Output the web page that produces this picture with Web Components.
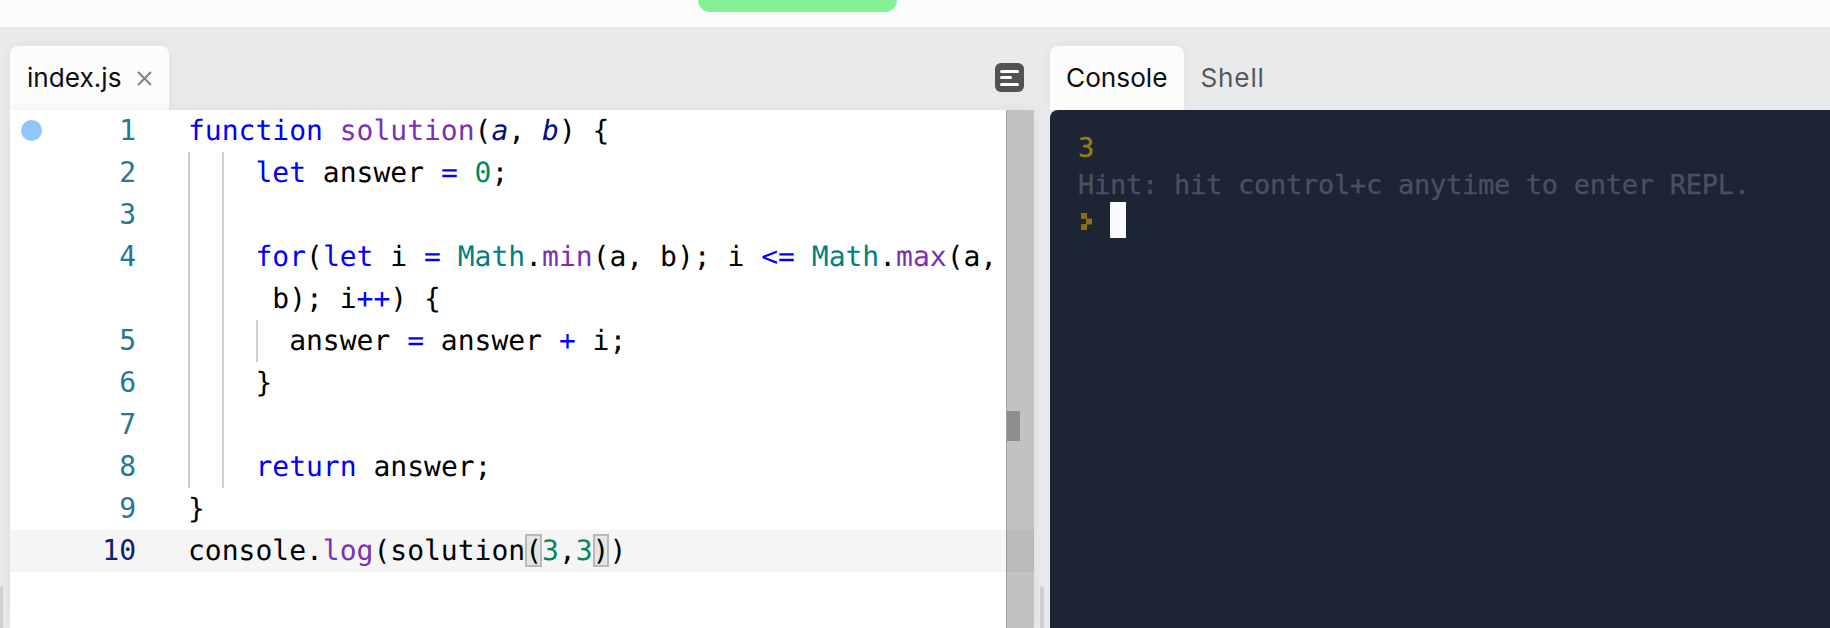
<!DOCTYPE html>
<html lang="en"><head><meta charset="utf-8"><title>Editor</title>
<style>
html,body{margin:0;padding:0;height:628px;overflow:hidden;background:#e9eaec}
</style></head>
<body>
<ide-shell>
  <top-bar slot="top"></top-bar>
  <code-pane slot="left">
    <code-line n="1"><span class="k">function</span> <span class="f">solution</span>(<span class="p">a</span>, <span class="p">b</span>) {</code-line>
    <code-line n="2" guides="2">    <span class="k">let</span> answer <span class="k">=</span> <span class="m">0</span>;</code-line>
    <code-line n="3" guides="2"></code-line>
    <code-line n="4" guides="2">    <span class="k">for</span>(<span class="k">let</span> i <span class="k">=</span> <span class="t">Math</span>.<span class="f">min</span>(a, b); i <span class="k">&lt;=</span> <span class="t">Math</span>.<span class="f">max</span>(a,</code-line>
    <code-line guides="2">     b); i<span class="k">++</span>) {</code-line>
    <code-line n="5" guides="3">      answer <span class="k">=</span> answer <span class="k">+</span> i;</code-line>
    <code-line n="6" guides="2">    }</code-line>
    <code-line n="7" guides="2"></code-line>
    <code-line n="8" guides="2">    <span class="k">return</span> answer;</code-line>
    <code-line n="9">}</code-line>
    <code-line n="10" active>console.<span class="f">log</span>(solution<span class="b">(</span><span class="m">3</span>,<span class="m">3</span><span class="b">)</span>)</code-line>
  </code-pane>
  <console-pane slot="right"></console-pane>
</ide-shell>
<script>
function def(name, css, html, init){
  customElements.define(name, class extends HTMLElement{
    constructor(){super();const s=this.attachShadow({mode:'open'});s.innerHTML='<style>'+css+'</style>'+html;}
    connectedCallback(){ if(init) init(this,this.shadowRoot); }
  });
}
def('ide-shell',`
  :host{display:grid;grid-template-rows:29px 1fr;width:1830px;height:628px;overflow:hidden;background:#e9eaec}
  .work{display:grid;grid-template-columns:1050px 1fr;min-height:0;position:relative}
  .edge{position:absolute;width:4px;top:557px;bottom:0;background:#cfd0d2;border-radius:2px 2px 0 0}
  .e1{left:0;width:3px}.e2{left:1040px}
  .col{min-width:0;min-height:0}
`,`<slot name="top"></slot><div class="work"><div class="col"><slot name="left"></slot></div><div class="col"><slot name="right"></slot></div><i class="edge e1"></i><i class="edge e2"></i></div>`);

def('top-bar',`
  :host{display:flex;box-sizing:border-box;height:29px;background:#fcfcfd;border-bottom:2px solid #e4e5e7;padding-left:698px}
  .pill{width:199px;height:12px;background:#84ef94;border-radius:0 0 13px 13px}
`,`<div class="pill"></div>`);

def('tab-item',`
  :host{display:flex;align-items:center;box-sizing:border-box;height:64px;padding:0 17px 0 16px;font:26.2px/1 Inter,"Noto Sans",sans-serif;color:#56585c}
  :host([selected]){background:#fcfcfd;color:#0d0e10;border-radius:8px 8px 0 0;box-shadow:0 0 14px rgba(0,0,0,.05)}
`,`<slot></slot>`);

def('code-pane',`
  :host{display:grid;grid-template-rows:81px 1fr;height:599px;font:28px/42px "DejaVu Sans Mono",monospace;color:#000}
  .tabs{display:flex;align-items:flex-end;justify-content:space-between;padding:0 26px 0 10px}
  .tabs>svg{display:block;margin-bottom:18px}
  .x{display:block;margin-left:15px}
  .idx{padding-left:1px}
  .body{position:relative;margin-left:10px;margin-right:16px;background:#fff;box-shadow:0 0 12px rgba(0,0,0,.06);overflow:hidden}
  .sb{position:absolute;left:996px;top:0;bottom:0;width:28px;box-sizing:border-box;background:#c2c2c0;border-left:1px solid #a0a0a0}
  .thumb{position:absolute;left:0;top:301px;width:13px;height:30px;background:#8d8d8d}
  .dot{position:absolute;left:11px;top:10px;width:21px;height:21px;border-radius:50%;background:#93c5fd}
  .rows{position:relative}
`,`<div class="tabs"><tab-item selected><span class="idx">index.js</span><svg class="x" width="15" height="15" viewBox="0 0 15 15"><path d="M1 1L14 14M14 1L1 14" stroke="#808186" stroke-width="2" fill="none"/></svg></tab-item>
  <svg width="29" height="29" viewBox="0 0 29 29"><rect width="29" height="29" rx="6" fill="#515254"/><rect x="5" y="7" width="19" height="3" rx="1.5" fill="#fff"/><rect x="5" y="13" width="12" height="3" rx="1.5" fill="#fff"/><rect x="5" y="20" width="19" height="3" rx="1.5" fill="#fff"/></svg></div>
  <div class="body"><div class="sb"><div class="thumb"></div></div><div class="dot"></div><div class="rows"><slot></slot></div></div>`);

def('code-line',`
  :host{display:flex;height:42px;position:relative;white-space:pre}
  :host([active]){background:rgba(0,0,0,.04)}
  .num{flex:none;width:126px;padding-right:52px;text-align:right;color:#237893}
  :host([active]) .num{color:#0b216f}
  .code{flex:1;min-width:0;position:relative;text-rendering:geometricPrecision}
  .g{position:absolute;top:0;bottom:0;width:2px;background:#d0d0d0}
  ::slotted(.k){color:#0000ff}
  ::slotted(.f){color:#7b30b0}
  ::slotted(.p){color:#001080;font-style:italic}
  ::slotted(.m){color:#098658}
  ::slotted(.t){color:#008080}
  ::slotted(.b){background:#e0e8e0;box-shadow:inset 0 0 0 2px #b9b9b9}
`,`<div class="num"></div><div class="code"><span class="gs"></span><slot></slot></div>`,(el,s)=>{
  s.querySelector('.num').textContent=el.getAttribute('n')||'';
  const g=+el.getAttribute('guides')||0,box=s.querySelector('.gs');
  box.innerHTML='';
  for(let i=0;i<g;i++){const d=document.createElement('i');d.className='g';d.style.left=[0,34,68][i]+'px';box.appendChild(d);}
});

def('console-pane',`
  :host{display:grid;grid-template-rows:81px 1fr;height:599px}
  .tabs{display:flex;align-items:flex-end}
  .shell{letter-spacing:.8px}
  .term{background:#1d2433;border-radius:8px 0 0 0;padding:19px 28px;font:27px/37px "DejaVu Sans Mono",monospace;letter-spacing:-.26px;-webkit-text-stroke:.3px;color:#9a7d14;white-space:pre}
  .hint{color:#4a5063}
  .prompt{display:flex;align-items:flex-start;height:36px;margin-top:-1px}
  .cursor{width:16px;height:36px;background:#f8fafc;margin-left:18px}
  svg{display:block;margin:11px 0 0 3px}
`,`<div class="tabs"><tab-item selected>Console</tab-item><tab-item class="shell">Shell</tab-item></div>
  <div class="term"><div>3</div><div class="hint">Hint: hit control+c anytime to enter REPL.</div><div class="prompt"><svg width="11" height="17" viewBox="0 0 11 17"><path d="M0 0h6v6H0zM5 5.500h6v6H5zM0 11h6v6H0z" fill="#8a6f12"/></svg><div class="cursor"></div></div></div>`);
</script>
</body></html>
